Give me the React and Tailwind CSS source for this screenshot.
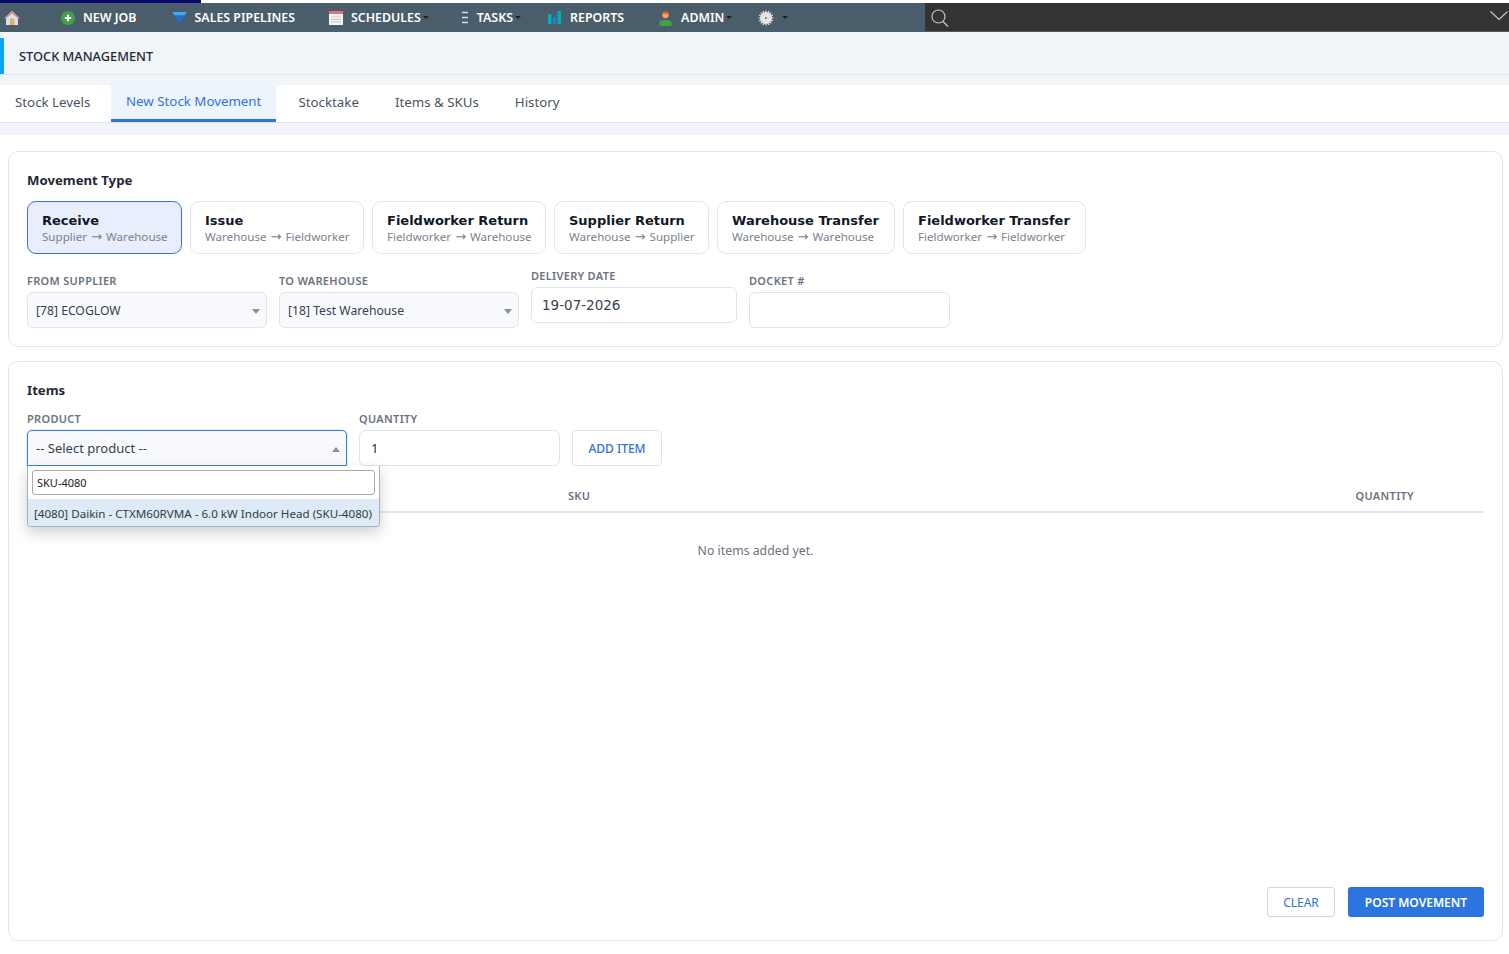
const font = "font-['Noto_Sans','Open_Sans',sans-serif]";

const movementTypes = [
    { title: 'Receive', from: 'Supplier', to: 'Warehouse', width: 'w-[155px]', active: true },
    { title: 'Issue', from: 'Warehouse', to: 'Fieldworker', width: 'w-[174px]' },
    { title: 'Fieldworker Return', from: 'Fieldworker', to: 'Warehouse', width: 'w-[174px]' },
    { title: 'Supplier Return', from: 'Warehouse', to: 'Supplier', width: 'w-[155px]' },
    { title: 'Warehouse Transfer', from: 'Warehouse', to: 'Warehouse', width: 'w-[178px]' },
    { title: 'Fieldworker Transfer', from: 'Fieldworker', to: 'Fieldworker', width: 'w-[183px]' },
];

const tabs = ['Stock Levels', 'New Stock Movement', 'Stocktake', 'Items & SKUs', 'History'];

function Caret() {
    return <span className="ml-[2px] mt-[-1px] w-0 h-0 border-x-[3.5px] border-x-transparent border-t-[3px] border-t-[#1c2328]" />;
}

function HomeIcon() {
    return (
        <svg width="16" height="16" viewBox="0 0 16 16">
            <path d="M8 1 L15.5 8 L14 8.5 V15 H2 V8.5 L0.5 8 Z" fill="#cfe3f0" />
            <path d="M8 1 L15.5 8 L14 8.5 L8 3.5 L2 8.5 L0.5 8 Z" fill="#d98a8c" />
            <rect x="6" y="8.5" width="4.5" height="6.5" fill="#f0a860" />
        </svg>
    );
}

function PlusIcon() {
    return (
        <svg width="14" height="14" viewBox="0 0 14 14">
            <circle cx="7" cy="7" r="7" fill="#43a047" />
            <path d="M7 3.8 V10.2 M3.8 7 H10.2" stroke="#fff" strokeWidth="2" />
        </svg>
    );
}

function FunnelIcon() {
    return (
        <svg width="15" height="12" viewBox="0 0 15 12">
            <path d="M0 0 H15 L12.5 3.5 H2.5 Z" fill="#42a5f5" />
            <path d="M2.5 3.5 H12.5 L7.5 11.5 Z" fill="#1e6fd0" />
        </svg>
    );
}

function CalendarIcon() {
    return (
        <svg width="14" height="14" viewBox="0 0 14 14">
            <rect width="14" height="14" fill="#f4f4f4" />
            <rect width="14" height="3" fill="#e57373" />
            <path d="M2 6 H12 M2 8.5 H12 M2 11 H12" stroke="#c9c9c9" />
        </svg>
    );
}

function TasksIcon() {
    return (
        <svg width="13" height="13" viewBox="0 0 13 13">
            <path d="M0 1.5 H3 M0 6.5 H3 M0 11.5 H3" stroke="#3f5fa8" strokeWidth="1.5" />
            <path d="M5 1.5 H11 M5 6.5 H11 M5 11.5 H11" stroke="#cfe0ee" strokeWidth="1.5" />
        </svg>
    );
}

function BarsIcon() {
    return (
        <svg width="14" height="13" viewBox="0 0 14 13">
            <rect x="0" y="3" width="3.5" height="10" fill="#00acc1" />
            <rect x="5" y="6" width="3" height="7" fill="#1e88c5" />
            <rect x="9.5" y="0" width="3.5" height="13" fill="#00acc1" />
        </svg>
    );
}

function UserIcon() {
    return (
        <svg width="13" height="16" viewBox="0 0 13 16">
            <circle cx="6.5" cy="5" r="3.2" fill="#f2a65a" />
            <path d="M3.2 4.5 C3.2 0 9.8 0 9.8 4.5 C8 3.2 5 3.2 3.2 4.5 Z" fill="#e8542c" />
            <path d="M0.5 16 V12.5 C0.5 10.5 3 10 6.5 10 C10 10 12.5 10.5 12.5 12.5 V16 Z" fill="#43a047" />
        </svg>
    );
}

function GearIcon() {
    return (
        <svg width="16" height="16" viewBox="0 0 16 16">
            <circle cx="8" cy="8" r="6" fill="#e4e4e4" />
            <path d="M8 0.5 V15.5 M0.5 8 H15.5 M2.7 2.7 L13.3 13.3 M13.3 2.7 L2.7 13.3 M5 1 L11 15 M11 1 L5 15 M1 5 L15 11 M1 11 L15 5" stroke="#e4e4e4" strokeWidth="1.2" />
            <circle cx="8" cy="8" r="1" fill="#5b6c78" />
        </svg>
    );
}

function SearchIcon() {
    return (
        <svg width="18" height="18" viewBox="0 0 18 18" fill="none" stroke="#c4c4c4" strokeWidth="1.2">
            <circle cx="7.5" cy="7.5" r="6.5" />
            <path d="M12 12.5 L17 17.5" />
        </svg>
    );
}

function NavLabel({ children, className }) {
    return <span className={className + ' pt-[2px]'}>{children}</span>;
}

function NavBar() {
    return (
        <div className="flex h-[29px] bg-[#4a5d6a]">
            <div className="flex items-center w-[925px] text-[12.4px] font-semibold text-white">
                <span className="ml-[4px]"><HomeIcon /></span>
                <span className="ml-[41px]"><PlusIcon /></span>
                <NavLabel className="ml-[8px]">NEW JOB</NavLabel>
                <span className="ml-[35px]"><FunnelIcon /></span>
                <NavLabel className="ml-[8px]">SALES PIPELINES</NavLabel>
                <span className="ml-[34px]"><CalendarIcon /></span>
                <NavLabel className="ml-[8px]">SCHEDULES</NavLabel>
                <Caret />
                <span className="ml-[28px]"><TasksIcon /></span>
                <NavLabel className="ml-[7px]">TASKS</NavLabel>
                <Caret />
                <span className="ml-[27px]"><BarsIcon /></span>
                <NavLabel className="ml-[8px]">REPORTS</NavLabel>
                <span className="ml-[35px]"><UserIcon /></span>
                <NavLabel className="ml-[9px]">ADMIN</NavLabel>
                <Caret />
                <span className="ml-[26px]"><GearIcon /></span>
                <span className="ml-[6px] flex"><Caret /></span>
            </div>
            <div className="flex-1 flex items-center justify-between bg-[#333333] border-b border-[#4a5d6a]">
                <span className="ml-[6px] mt-[1px]"><SearchIcon /></span>
                <svg width="18" height="9" viewBox="0 0 18 9" fill="none" stroke="#c4c4c4" strokeWidth="1.2" className="mr-[1px] mt-[-3px]">
                    <path d="M0.5 0.5 L9 8.5 L17.5 0.5" />
                </svg>
            </div>
        </div>
    );
}

function Tabs() {
    return (
        <div className="flex h-[38px] bg-white border-b border-[#dfe3e8] text-[13.3px]">
            {tabs.map((tab, i) => (
                <div
                    key={tab}
                    className={
                        i === 1
                            ? 'h-[37px] px-[15px] flex items-center bg-[#eef4fc] text-[#2f73e0] border-b-[3px] border-[#2f73dd]'
                            : 'h-[37px] px-[15px] pb-[1px] flex items-center text-[#4b5563] ' + (i === 0 ? 'w-[111px]' : i === 2 ? 'ml-[7px]' : 'ml-[6px]')
                    }
                >
                    {tab}
                </div>
            ))}
        </div>
    );
}

function FieldLabel({ children }) {
    return <div className="text-[11px] leading-[14px] font-semibold text-[#6b7280] uppercase tracking-[0.3px] mb-[4px]">{children}</div>;
}

function SelectBox({ value, width }) {
    return (
        <div className={width + ' h-[36px] flex items-center justify-between pl-[8px] pr-[6px] pt-[2px] bg-[#f7f9fc] border border-[#dfe3ea] rounded-[6px] text-[12.2px] text-[#374151]'}>
            <span>{value}</span>
            <span className="w-0 h-0 border-x-[4px] border-x-transparent border-t-[5px] border-t-[#8a8f96]" />
        </div>
    );
}

function MovementCard() {
    return (
        <div className="h-[196px] ml-[8px] mr-[6px] bg-white border border-[#e2e6ec] rounded-[10px] pt-[18px] pl-[18px]">
            <div className="text-[13.2px] leading-[20px] font-bold text-[#1f2937]">Movement Type</div>
            <div className="flex gap-[8px] mt-[11px]">
                {movementTypes.map(t => (
                    <div
                        key={t.title}
                        className={
                            t.width + ' h-[53px] px-[14px] pt-[10px] rounded-[9px] border ' +
                            (t.active ? 'bg-[#e8eefb] border-[#3d6fd6]' : 'bg-white border-[#e2e6ec]')
                        }
                    >
                        <div className="font-['DejaVu_Sans',sans-serif] font-bold text-[13px] leading-[17px] text-[#111827] whitespace-nowrap">{t.title}</div>
                        <div className="text-[11.6px] leading-[15px] text-[#7a828e] whitespace-nowrap">
                            {t.from} <span className="mx-px font-['DejaVu_Sans',sans-serif] text-[13px]">→</span> {t.to}
                        </div>
                    </div>
                ))}
            </div>
            <div className="flex items-start gap-[12px] mt-[15px]">
                <div className="mt-[5px]">
                    <FieldLabel>From Supplier</FieldLabel>
                    <SelectBox value="[78] ECOGLOW" width="w-[240px]" />
                </div>
                <div className="mt-[5px]">
                    <FieldLabel>To Warehouse</FieldLabel>
                    <SelectBox value="[18] Test Warehouse" width="w-[240px]" />
                </div>
                <div>
                    <FieldLabel>Delivery Date</FieldLabel>
                    <div className="w-[206px] h-[36px] flex items-center pl-[10px] bg-white border border-[#dfe3ea] rounded-[6px] font-['DejaVu_Sans',sans-serif] text-[13.5px] text-[#374151]">19-07-2026</div>
                </div>
                <div className="mt-[5px]">
                    <FieldLabel>Docket #</FieldLabel>
                    <div className="w-[201px] h-[36px] bg-white border border-[#dfe3ea] rounded-[6px]" />
                </div>
            </div>
        </div>
    );
}

function ProductDropdown() {
    return (
        <div className="absolute left-0 top-[36px] w-[353px] h-[61px] bg-white border border-[#a9b0b8] border-t-0 rounded-b-[4px] shadow-[0_6px_14px_rgba(0,0,0,0.18)] z-10">
            <div className="h-[33px] px-[4px] pt-[4px]">
                <div className="h-[25px] flex items-center pl-[4px] pt-[2px] border border-[#a9a9a9] rounded-[3px] text-[11px] text-[#222]">SKU-4080</div>
            </div>
            <div className="h-[27px] flex items-center pl-[6px] pt-[2px] bg-[#deeaf6] rounded-b-[4px] text-[11.6px] text-[#333b45] whitespace-nowrap">
                [4080] Daikin - CTXM60RVMA - 6.0 kW Indoor Head (SKU-4080)
            </div>
        </div>
    );
}

function ItemsCard() {
    return (
        <div className="h-[580px] ml-[8px] mr-[6px] mt-[14px] flex flex-col bg-white border border-[#e2e6ec] rounded-[10px] pt-[18px] px-[18px]">
            <div className="text-[13.2px] leading-[20px] font-bold text-[#1f2937]">Items</div>
            <div className="flex items-end gap-[12px] mt-[12px]">
                <div className="relative">
                    <FieldLabel>Product</FieldLabel>
                    <div className="relative">
                        <div className="w-[320px] h-[36px] flex items-center justify-between pl-[8px] pr-[6px] pt-[2px] bg-[#f7f9fc] border border-[#3d80dc] rounded-t-[5px] shadow-[0_0_0_1px_rgba(90,150,230,0.2)] text-[13px] text-[#374151]">
                            <span>-- Select product --</span>
                            <span className="w-0 h-0 border-x-[4px] border-x-transparent border-b-[5px] border-b-[#8a8f96]" />
                        </div>
                        <ProductDropdown />
                    </div>
                </div>
                <div>
                    <FieldLabel>Quantity</FieldLabel>
                    <div className="w-[201px] h-[36px] flex items-center pl-[11px] pt-[2px] bg-white border border-[#dfe3ea] rounded-[6px] text-[13px] text-[#1f2937]">1</div>
                </div>
                <div className="w-[90px] h-[36px] flex items-center justify-center pt-[2px] bg-white border border-[#dfe3ea] rounded-[4px] text-[12px] font-medium text-[#2f73e0]">ADD ITEM</div>
            </div>
            <div className="flex justify-between h-[36px] mt-[11px] pt-[12px] pl-[541px] pr-[70px] border-b-2 border-[#e2e6ec] text-[11px] leading-[14px] font-semibold text-[#6b7280] tracking-[0.3px]">
                <span>SKU</span>
                <span>QUANTITY</span>
            </div>
            <div className="mt-[28px] text-center text-[12.3px] leading-[20px] text-[#6b7280]">No items added yet.</div>
            <div className="flex justify-end gap-[13px] mt-auto mb-[23px]">
                <div className="w-[68px] h-[30px] flex items-center justify-center pt-[2px] bg-white border border-[#cfd6df] rounded-[3px] text-[12px] text-[#2f73e0]">CLEAR</div>
                <div className="w-[136px] h-[30px] flex items-center justify-center pt-[2px] bg-[#2c74e0] rounded-[3px] text-[12px] font-semibold text-white">POST MOVEMENT</div>
            </div>
        </div>
    );
}

export default function App() {
    return (
        <div className={font + ' w-[1509px] h-[954px] overflow-hidden bg-white'}>
            <div className="h-[3px] w-[201px] bg-[#0a0a6e]" />
            <NavBar />
            <div className="h-[103px] bg-[#f1f4f8] pt-[6px]">
                <div className="h-[37px] flex items-center border-b border-[#e2e6ec]">
                    <div className="w-[4px] h-[36px] bg-[#0ea5e9]" />
                    <div className="ml-[15px] pt-[2px] text-[12.8px] font-medium text-[#1f2937]">STOCK MANAGEMENT</div>
                </div>
                <div className="mt-[10px]"><Tabs /></div>
            </div>
            <div className="pt-[16px]">
                <MovementCard />
                <ItemsCard />
            </div>
        </div>
    );
}
